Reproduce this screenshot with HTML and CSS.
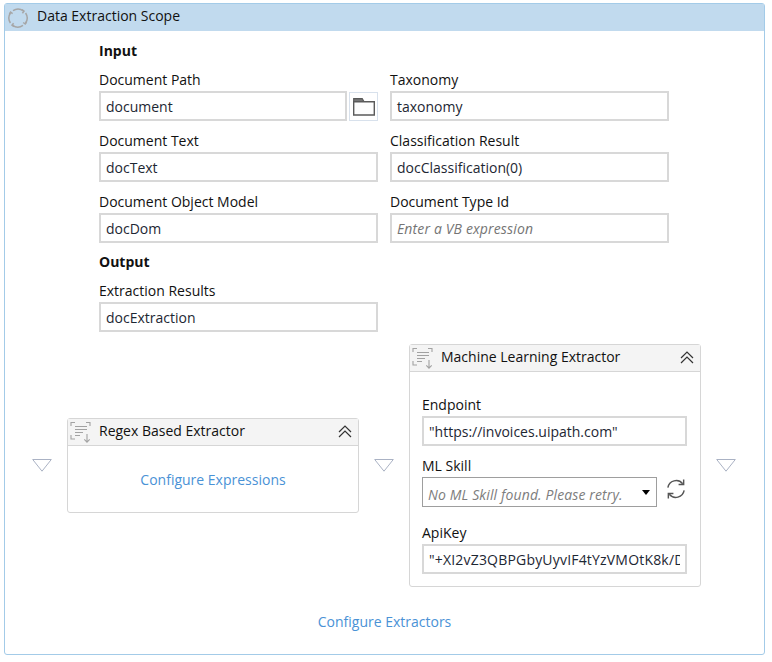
FILE: index.html
```html
<!DOCTYPE html>
<html lang="en">
<head>
<meta charset="utf-8">
<title>Data Extraction Scope</title>
<link rel="stylesheet" href="styles.css">
</head>
<body>
<main class="scope">
  <header class="scope-head">
    <svg class="scope-icon" width="22" height="22" viewBox="0 0 22 22" fill="none" stroke="#a6a6a6" stroke-width="1.5">
      <path d="M6 3.6A9.2 9.2 0 0 1 16.5 4"/>
      <path d="M18.6 6A9.2 9.2 0 0 1 18.4 16.4"/>
      <path d="M16 18.4A9.2 9.2 0 0 1 5.6 18.4"/>
      <path d="M3.4 16A9.2 9.2 0 0 1 3.4 6"/>
      <path d="M15 2.6l2 1.6-1.6 2M19.6 15l-1.4 2-2-1.5M7 19.6l-2-1.4 1.6-2M2.4 7.2l1.2-2 2 1.4"/>
    </svg>
    <span class="scope-title">Data Extraction Scope</span>
  </header>

  <section class="form">
    <h2 class="heading span">Input</h2>
    <div class="field">
      <label class="label">Document Path</label>
      <div class="with-button">
        <div class="input">document</div>
        <button class="browse" type="button" aria-label="Browse">
          <svg width="22" height="18" viewBox="0 0 22 18" fill="none">
            <path d="M0.7 4V0.7h8.5l1.8 3z" stroke="#5a5a5a" stroke-width="1.2" fill="#777"/>
            <path d="M0.7 3.7h20.6v13.3H0.7z" stroke="#5a5a5a" stroke-width="1.4" fill="#fdfdfd"/>
          </svg>
        </button>
      </div>
    </div>
    <div class="field">
      <label class="label">Taxonomy</label>
      <div class="input">taxonomy</div>
    </div>
    <div class="field">
      <label class="label">Document Text</label>
      <div class="input">docText</div>
    </div>
    <div class="field">
      <label class="label">Classification Result</label>
      <div class="input">docClassification(0)</div>
    </div>
    <div class="field">
      <label class="label">Document Object Model</label>
      <div class="input">docDom</div>
    </div>
    <div class="field">
      <label class="label">Document Type Id</label>
      <div class="input hint">Enter a VB expression</div>
    </div>
    <h2 class="heading span">Output</h2>
    <div class="field span">
      <label class="label">Extraction Results</label>
      <div class="input half">docExtraction</div>
    </div>
  </section>

  <section class="flow">
    <svg class="drop" width="20" height="13" viewBox="0 0 20 13"><path d="M0.7 0.5h18.6L10 12.2z" fill="#fff" stroke="#aab2c4"/></svg>

    <article class="card">
      <header class="card-head">
        <svg class="extract" width="22" height="22" viewBox="0 0 22 22" fill="none" stroke="#a2a2a2" stroke-width="1.1">
          <path d="M1 5V1.5h4M16 1.5h4V5M1 14v4h4"/>
          <path d="M5 5.5h12M5 8.5h12M5 11.5h8M5 14.5h5"/>
          <path d="M17 13v8M14.3 18.4l2.7 2.7 2.7-2.7"/>
        </svg>
        <span class="card-title">Regex Based Extractor</span>
        <svg class="collapse" width="14" height="13" viewBox="0 0 14 13" fill="none" stroke="#333" stroke-width="1.2"><path d="M1 7l6-6 6 6M1 12l6-6 6 6"/></svg>
      </header>
      <div class="card-link"><a class="link">Configure Expressions</a></div>
    </article>

    <svg class="drop" width="20" height="13" viewBox="0 0 20 13"><path d="M0.7 0.5h18.6L10 12.2z" fill="#fff" stroke="#aab2c4"/></svg>

    <article class="card">
      <header class="card-head">
        <svg class="extract" width="22" height="22" viewBox="0 0 22 22" fill="none" stroke="#a2a2a2" stroke-width="1.1">
          <path d="M1 5V1.5h4M16 1.5h4V5M1 14v4h4"/>
          <path d="M5 5.5h12M5 8.5h12M5 11.5h8M5 14.5h5"/>
          <path d="M17 13v8M14.3 18.4l2.7 2.7 2.7-2.7"/>
        </svg>
        <span class="card-title">Machine Learning Extractor</span>
        <svg class="collapse" width="14" height="13" viewBox="0 0 14 13" fill="none" stroke="#333" stroke-width="1.2"><path d="M1 7l6-6 6 6M1 12l6-6 6 6"/></svg>
      </header>
      <div class="card-body">
        <div class="field">
          <label class="label">Endpoint</label>
          <div class="input">"https://invoices.uipath.com"</div>
        </div>
        <div class="field">
          <label class="label">ML Skill</label>
          <div class="select-row">
            <div class="select"><span class="hint-text">No ML Skill found. Please retry.</span><i class="caret"></i></div>
            <svg class="refresh" width="22" height="22" viewBox="0 0 23 22" fill="none" stroke="#555" stroke-width="1.5">
              <path d="M3 9.5A8.8 8.8 0 0 1 18.5 5.5"/>
              <path d="M20 12.5A8.8 8.8 0 0 1 4.5 16.5"/>
              <path d="M19.5 1v5.3h-5.3M3.5 21v-5.3h5.3"/>
            </svg>
          </div>
        </div>
        <div class="field">
          <label class="label">ApiKey</label>
          <div class="input key"><span class="key-text">"+XI2vZ3QBPGbyUyvIF4tYzVMOtK8k/D</span></div>
        </div>
      </div>
    </article>

    <svg class="drop" width="20" height="13" viewBox="0 0 20 13"><path d="M0.7 0.5h18.6L10 12.2z" fill="#fff" stroke="#aab2c4"/></svg>
  </section>

  <footer class="scope-foot"><a class="link">Configure Extractors</a></footer>
</main>
</body>
</html>
```
FILE: styles.css
```css
* { box-sizing: border-box; }
html, body { margin: 0; background: #fff; }
body {
  padding: 3px 7px 7px 4px;
  font-family: "Open Sans", "Noto Sans", sans-serif;
  font-size: 14px;
  line-height: 20px;
  color: #111;
}
.scope {
  height: 652px;
  border: 1px solid #a3cbe8;
  border-radius: 3px;
  display: flex;
  flex-direction: column;
}
.scope-head {
  height: 27px;
  flex: none;
  background: #c1daee;
  display: flex;
  align-items: center;
  gap: 8px;
  padding-left: 2px;
}
.scope-icon { flex: none; }
.scope-title { margin-bottom: 3px; }
.form {
  margin: 11px 0 0 94px;
  width: 570px;
  display: grid;
  grid-template-columns: 279px 279px;
  column-gap: 12px;
  row-gap: 10px;
}
.span { grid-column: 1 / -1; }
.heading {
  margin: 0;
  font-size: 14px;
  font-weight: 700;
  line-height: 18px;
}
.label { display: block; margin-bottom: 1px; }
.input {
  height: 30px;
  border: 2px solid #d8d8d8;
  padding: 1px 5px 0;
  display: flex;
  align-items: center;
  white-space: nowrap;
  overflow: hidden;
  color: #1d2733;
  background: #fff;
  flex: 1;
}
.half { width: 279px; }
.hint { font-style: italic; color: #757575; letter-spacing: .14px; }
.key-text { overflow: hidden; width: 100%; letter-spacing: .19px; }
.key { padding-right: 5px; }
.with-button { display: flex; gap: 2px; }
.browse {
  width: 29px;
  height: 29px;
  margin-top: 1px;
  flex: none;
  padding: 0;
  border: 1px solid #d8e1ec;
  background: #fff;
  display: flex;
  align-items: center;
  justify-content: center;
}
.flow {
  margin-top: 12px;
  padding-left: 27px;
  display: flex;
  align-items: center;
  gap: 15px;
}
.drop { flex: none; }
.card {
  width: 292px;
  border: 1px solid #d6d6d6;
  border-radius: 3px;
  background: #fff;
  flex: none;
}
.card-head {
  height: 27px;
  background: #f4f4f4;
  border-bottom: 1px solid #d6d6d6;
  display: flex;
  align-items: center;
  padding: 0 5px 1px 2px;
  color: #111;
}
.extract { flex: none; }
.card-title { margin: 0 0 2px 7px; flex: 1; }
.collapse { flex: none; margin-right: 1px; }
.card-link {
  height: 66px;
  padding-top: 1px;
  display: flex;
  align-items: center;
  justify-content: center;
}
.link { color: #4a92d6; }
.card-body {
  padding: 23px 13px 12px 12px;
  display: flex;
  flex-direction: column;
  gap: 10px;
}
.select-row { display: flex; align-items: flex-start; gap: 8px; margin-bottom: 6px; }
.select {
  width: 235px;
  height: 30px;
  flex: none;
  border: 1px solid #9e9e9e;
  display: flex;
  align-items: center;
  justify-content: space-between;
  padding: 0 6px 0 5px;
}
.refresh { flex: none; margin-top: 1px; }
.hint-text {
  font-style: italic;
  color: #7d7d7d;
  white-space: nowrap;
  letter-spacing: .12px;
  padding-top: 6px;
}
.caret {
  width: 0;
  height: 0;
  border-left: 4px solid transparent;
  border-right: 4px solid transparent;
  border-top: 5px solid #000;
}
.scope-foot {
  margin-top: 25px;
  text-align: center;
}
```
